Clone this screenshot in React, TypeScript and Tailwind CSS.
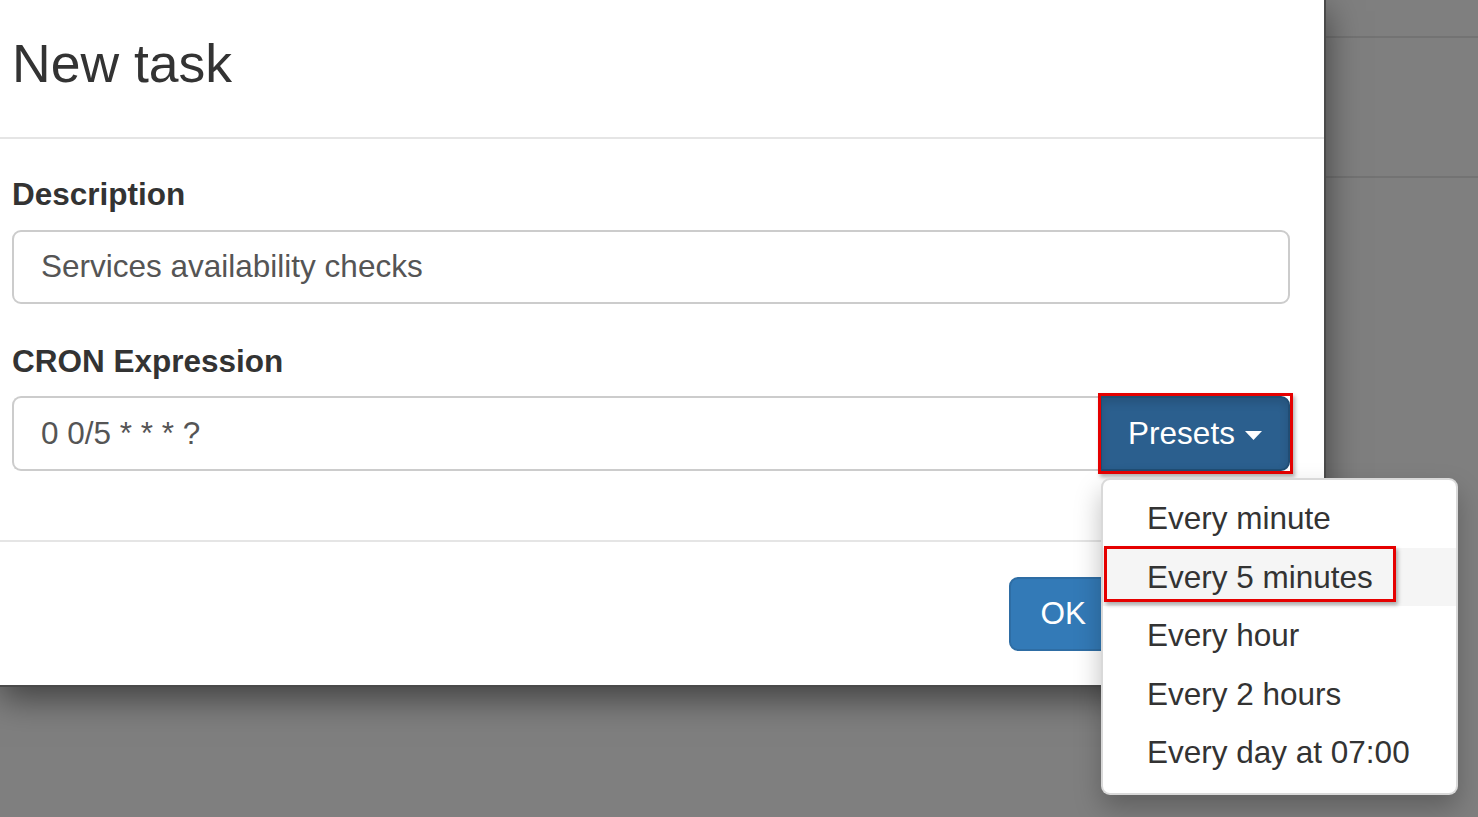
const PRESETS = ["Every minute", "Every 5 minutes", "Every hour", "Every 2 hours", "Every day at 07:00"];

function Caret() {
  return (
    <svg width="17" height="9" viewBox="0 0 17 9" className="ml-[10px] mt-[3px]">
      <path d="M0 0 L17 0 L8.5 9 Z" fill="#fff" />
    </svg>
  );
}

function PresetMenu() {
  return (
    <div className="absolute left-[1px] top-[82px] w-[357px] bg-white border-2 border-[rgba(0,0,0,0.15)] rounded-[9px] pt-[9px] pb-[11px] shadow-[0_13px_27px_rgba(0,0,0,0.25)] z-20">
      {PRESETS.map((p, i) => (
        <div
          key={p}
          className={`relative h-[58.5px] leading-[58.5px] pl-[44px] text-[31.5px] text-[#333] whitespace-nowrap ${i === 1 ? "bg-[#f5f5f5]" : ""}`}
        >
          {p}
          {/* annotation box round the chosen preset */}
          {i === 1 && (
            <div className="absolute left-[1px] top-[-2px] w-[292px] h-[56px] border-[3px] border-[#e50000] shadow-[2px_3px_4px_rgba(0,0,0,0.3)]" />
          )}
        </div>
      ))}
    </div>
  );
}

export default function App() {
  return (
    <div
      className="relative w-[1478px] h-[817px] overflow-hidden bg-[#7f7f7f]"
      style={{ fontFamily: '"Liberation Sans", Arial, sans-serif' }}
    >
      {/* page behind the backdrop */}
      <div className="flex flex-col">
        <div className="h-[38px] border-b-2 border-[#737373]" />
        <div className="h-[140px] border-b-2 border-[#737373]" />
      </div>

      <div className="absolute left-0 top-0 w-[1326px] bg-white border-r-2 border-b-2 border-[#4a4a4a] shadow-[0_11px_33px_rgba(0,0,0,0.5)] z-10">
        {/* header */}
        <div className="h-[139px] border-b-2 border-[#e5e5e5] pl-[12px] pt-[32px]">
          <h3 className="text-[53.5px] leading-[64px] text-[#333] font-normal">New task</h3>
        </div>

        {/* body */}
        <div className="pl-[12px] pr-[34px] pt-[33px] pb-[69px]">
          <label className="block text-[31.5px] leading-[44px] font-bold text-[#333] mb-[14px]">Description</label>
          <div className="h-[74px] border-2 border-[#ccc] rounded-[9px] pl-[27px] flex items-center text-[31.5px] text-[#555]">
            Services availability checks
          </div>

          <label className="block text-[31.5px] leading-[44px] font-bold text-[#333] mt-[35px] mb-[13px]">CRON Expression</label>
          <div className="flex h-[75px]">
            <div className="flex-1 border-2 border-r-0 border-[#ccc] rounded-l-[9px] pl-[27px] flex items-center text-[31.5px] text-[#555]">
              0 0/5 * * * ?
            </div>
            <div className="relative w-[190px]">
              <div className="h-full bg-[#2b5f8e] border-2 border-[#204d74] rounded-r-[9px] flex items-center justify-center text-white text-[31.5px] shadow-[inset_0_5px_9px_rgba(0,0,0,0.125)]">
                Presets
                <Caret />
              </div>
              {/* annotation box round the button */}
              <div className="absolute left-[-2px] top-[-3px] w-[195px] h-[81px] border-[3px] border-[#e50000] shadow-[2px_3px_4px_rgba(0,0,0,0.3)]" />
              <PresetMenu />
            </div>
          </div>
        </div>

        {/* footer: second button sits under the open menu */}
        <div className="border-t-2 border-[#e5e5e5] pt-[35px] pb-[34px] pr-[34px] flex justify-end gap-[11px]">
          <button className="h-[74px] px-[29px] bg-[#337ab7] border-2 border-[#2e6da4] rounded-[9px] text-white text-[31.5px]">OK</button>
          <div className="w-[162px] h-[74px]" />
        </div>
      </div>
    </div>
  );
}
